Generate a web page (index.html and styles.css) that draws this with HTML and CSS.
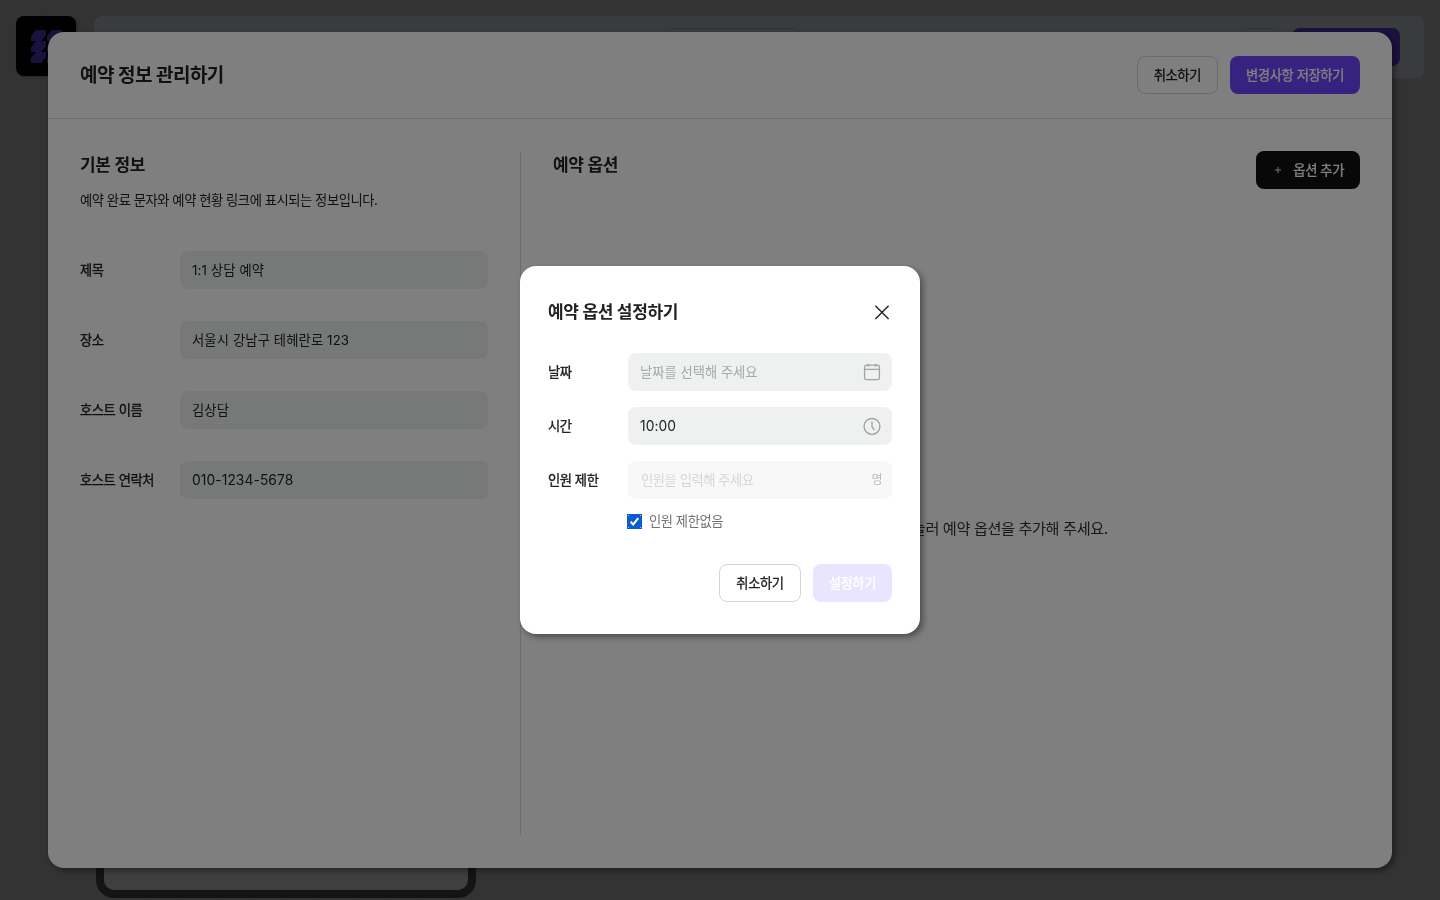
FILE: index.html
```html
<!DOCTYPE html>
<html lang="ko">
<head>
<meta charset="utf-8">
<title>예약 정보 관리하기</title>
<link rel="stylesheet" href="styles.css">
</head>
<body>
<div class="page">
  <header class="topbar">
    <div class="logo">
      <svg width="32" height="34" viewBox="0 0 32 34" fill="#6d47ff"><defs><path id="leaf" d="M0 11V6L5 0H15V5L10 11Z"/></defs><use href="#leaf"/><use href="#leaf" x="16"/><use href="#leaf" y="11"/><use href="#leaf" x="16" y="11"/><use href="#leaf" y="22"/><use href="#leaf" x="16" y="22"/></svg>
    </div>
    <div class="toolbar">
      <div class="tool-segment"></div>
      <div class="tool-icon"></div>
      <div class="tool-publish"></div>
    </div>
  </header>
  <div class="device"></div>
</div>

<div class="overlay">
  <section class="manager">
    <header class="manager-head">
      <h1>예약 정보 관리하기</h1>
      <div class="actions">
        <button class="btn outline">취소하기</button>
        <button class="btn primary">변경사항 저장하기</button>
      </div>
    </header>
    <div class="manager-body">
      <div class="info">
        <h2>기본 정보</h2>
        <p class="desc">예약 완료 문자와 예약 현황 링크에 표시되는 정보입니다.</p>
        <div class="info-rows">
          <div class="row"><span class="label">제목</span><div class="field">1:1 상담 예약</div></div>
          <div class="row"><span class="label">장소</span><div class="field">서울시 강남구 테헤란로 123</div></div>
          <div class="row"><span class="label">호스트 이름</span><div class="field">김상담</div></div>
          <div class="row"><span class="label">호스트 연락처</span><div class="field digits">010-1234-5678</div></div>
        </div>
      </div>
      <div class="options">
        <div class="options-head">
          <h2>예약 옵션</h2>
          <button class="btn dark"><svg width="8" height="8" viewBox="0 0 8 8" stroke="#fff" stroke-width=".9"><path d="M4 .8V7.2M.8 4H7.2"/></svg>옵션 추가</button>
        </div>
        <div class="empty">옵션 추가 버튼을 눌러 예약 옵션을 추가해 주세요.</div>
      </div>
    </div>
  </section>
</div>

<div class="overlay">
  <section class="dialog">
    <header class="dialog-head">
      <h2>예약 옵션 설정하기</h2>
      <svg width="20" height="20" viewBox="0 0 20 20" fill="none" stroke="#222" stroke-width="1.4"><path d="M3.4 3.8L16.6 17M16.6 3.8L3.4 17"/></svg>
    </header>
    <div class="dialog-rows">
      <div class="row"><span class="label">날짜</span><div class="field hint">날짜를 선택해 주세요
        <svg width="20" height="20" viewBox="0 0 20 20" fill="none" stroke="#a0a2a3" stroke-width="1.3"><rect x="2.6" y="3.2" width="14.8" height="14.4" rx="1.6"/><path d="M2.6 7.4H17.4M6.2 1.9V4.8M13.8 1.9V4.8"/></svg></div></div>
      <div class="row"><span class="label">시간</span><div class="field digits">10:00
        <svg width="20" height="20" viewBox="0 0 20 20" fill="none" stroke="#a0a2a3" stroke-width="1.3"><circle cx="10" cy="10.4" r="7.9"/><path d="M10 5.6V10.8L12.4 14"/></svg></div></div>
      <div class="row"><span class="label">인원 제한</span><div class="field disabled">인원을 입력해 주세요<span class="unit">명</span></div></div>
    </div>
    <label class="check">
      <span class="box"><svg width="15" height="15" viewBox="0 0 15 15" fill="none" stroke="#fff" stroke-width="2"><path d="M3.6 7.8L6.2 10.4L11.2 4.2"/><path d="M1 1.5H2M13 1.5H14M1 13.5H2M13 13.5H14" stroke="#9fc2ef" stroke-width="1"/></svg></span>인원 제한없음
    </label>
    <div class="actions dialog-actions">
      <button class="btn outline">취소하기</button>
      <button class="btn faded">설정하기</button>
    </div>
  </section>
</div>
</body>
</html>
```
FILE: styles.css
```css
* { box-sizing: border-box; }
body {
  margin: 0;
  height: 900px;
  overflow: hidden;
  color: #222;
  font: 13.3px/20px Inter, "Noto Sans CJK KR", sans-serif;
  letter-spacing: -.45px;
}
h1, h2, p { margin: 0; }
h1 { padding-top: 2px; font-size: 19px; line-height: 28px; letter-spacing: -.5px; }
h2 { padding-top: 1px; font-size: 17px; line-height: 26px; letter-spacing: -.3px; }

.page {
  height: 900px;
  padding: 16px;
  background: repeating-linear-gradient(90deg, #ccc 0 12px, #c6c6c6 12px 13px, #ccc 13px 34px);
}
.topbar { display: flex; gap: 18px; }
.logo { width: 60px; height: 60px; padding: 14px 15px; border-radius: 8px; background: #000; box-shadow: 1px 1px 2px #0004; }
.toolbar { flex: 1; height: 62px; display: flex; justify-content: flex-end; padding: 12px 24px; border-radius: 8px; background: #ebeef5; }
.tool-segment { width: 136px; height: 38px; margin-right: 440px; border: 1px solid #c8cbd0; border-radius: 8px; }
.tool-icon { width: 36px; height: 38px; margin-right: 14px; border: 1px solid #c8cbd0; border-radius: 8px; }
.tool-publish { width: 108px; height: 38px; border-radius: 8px; background: #6d47ff; }
.device { width: 380px; height: 720px; margin: 100px 0 0 80px; border: 8px solid #505050; border-radius: 18px; background: #fff; }

.overlay {
  position: fixed;
  inset: 0;
  display: grid;
  place-items: center;
  background: rgba(0, 0, 0, .5);
}
.manager {
  width: 1344px;
  height: 836px;
  display: flex;
  flex-direction: column;
  border-radius: 16px;
  background: #fff;
  box-shadow: 3px 3px 6px rgba(0, 0, 0, .4);
}
.manager-head { height: 87px; display: flex; align-items: center; justify-content: space-between; padding: 0 32px; border-bottom: 1px solid #d8dbdc; }
.manager-body { flex: 1; display: flex; padding: 32px; }
.info { width: 441px; padding-right: 32px; border-right: 1px solid #d8dbdc; }
.desc { margin-top: 12px; }
.info-rows { display: grid; gap: 32px; margin-top: 41px; }
.row { display: flex; align-items: center; }
.label { width: 100px; -webkit-text-stroke: .35px currentColor; }
.field {
  flex: 1;
  height: 38px;
  display: flex;
  align-items: center;
  justify-content: space-between;
  padding: 0 10px 0 12px;
  border-radius: 8px;
  background: #eef1f0;
  letter-spacing: .12px;
}
.digits { font-size: 13.8px; letter-spacing: .08px; }
.options { flex: 1; display: flex; flex-direction: column; padding-left: 32px; }
.options-head { display: flex; justify-content: space-between; align-items: flex-start; }
.empty { flex: 1; display: grid; place-items: center; padding-top: 32px; color: #333; font-size: 15.2px; letter-spacing: -.4px; }

.actions { display: flex; gap: 12px; }
.btn {
  height: 38px;
  display: flex;
  align-items: center;
  padding: 0 16px;
  border: 0;
  border-radius: 8px;
  color: #fff;
  font: inherit;
  letter-spacing: -.4px;
  -webkit-text-stroke: .3px currentColor;
}
.outline { border: 1px solid #d2d4d6; background: #fff; color: #222; }
.primary { background: #6d47ff; }
.dark { gap: 11px; padding-left: 18.5px; background: #101010; }
.faded { background: #e9e5ff; }

.dialog {
  width: 400px;
  height: 368px;
  padding: 32px 28px;
  border-radius: 16px;
  background: #fff;
  box-shadow: 3px 3px 6px rgba(0, 0, 0, .4);
}
.dialog-head { display: flex; align-items: center; justify-content: space-between; height: 28px; }
.dialog-head h2 { padding-top: 0; }
.dialog-rows { display: grid; gap: 16px; margin-top: 27px; }
.dialog .label { width: 80px; }
.hint { color: #a7a9aa; letter-spacing: 0; }
.disabled { padding-left: 13px; background: #f8f8f8; color: #d6d6d6; letter-spacing: -.45px; }
.unit { color: #bbb; font-size: 12px; }
.check { display: flex; align-items: center; gap: 7px; margin: 12px 0 0 79px; color: #6f7274; letter-spacing: -.45px; }
.box { width: 15px; height: 15px; background: #0b5cd0; display: flex; }
.dialog-actions { justify-content: flex-end; margin-top: 33px; }
```
